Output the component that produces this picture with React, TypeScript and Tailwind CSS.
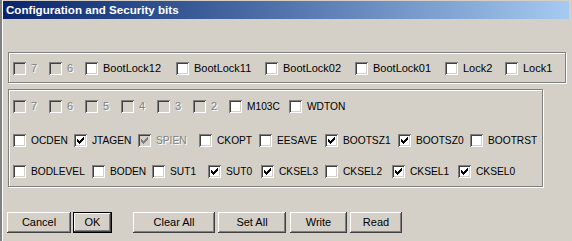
import React from 'react'

type Bit = { label: string; w: string; checked?: boolean; disabled?: boolean }

const row1: Bit[] = [
  { label: '7', w: 'w-[36px]', disabled: true },
  { label: '6', w: 'w-[36px]', disabled: true },
  { label: 'BootLock12', w: 'w-[91px]' },
  { label: 'BootLock11', w: 'w-[89px]' },
  { label: 'BootLock02', w: 'w-[90px]' },
  { label: 'BootLock01', w: 'w-[90px]' },
  { label: 'Lock2', w: 'w-[60px]' },
  { label: 'Lock1', w: 'w-[50px]' },
]

const row2: Bit[] = [
  { label: '7', w: 'w-[36px]', disabled: true },
  { label: '6', w: 'w-[36px]', disabled: true },
  { label: '5', w: 'w-[36px]', disabled: true },
  { label: '4', w: 'w-[36px]', disabled: true },
  { label: '3', w: 'w-[36px]', disabled: true },
  { label: '2', w: 'w-[36px]', disabled: true },
  { label: 'M103C', w: 'w-[60px]' },
  { label: 'WDTON', w: 'w-[60px]' },
]

const row3: Bit[] = [
  { label: 'OCDEN', w: 'w-[61px]' },
  { label: 'JTAGEN', w: 'w-[64px]', checked: true },
  { label: 'SPIEN', w: 'w-[61px]', checked: true, disabled: true },
  { label: 'CKOPT', w: 'w-[60px]' },
  { label: 'EESAVE', w: 'w-[66px]' },
  { label: 'BOOTSZ1', w: 'w-[73px]', checked: true },
  { label: 'BOOTSZ0', w: 'w-[72px]', checked: true },
  { label: 'BOOTRST', w: 'w-[68px]' },
]

const row4: Bit[] = [
  { label: 'BODLEVEL', w: 'w-[79px]' },
  { label: 'BODEN', w: 'w-[60px]' },
  { label: 'SUT1', w: 'w-[56px]' },
  { label: 'SUT0', w: 'w-[53px]', checked: true },
  { label: 'CKSEL3', w: 'w-[64px]', checked: true },
  { label: 'CKSEL2', w: 'w-[67px]' },
  { label: 'CKSEL1', w: 'w-[66px]', checked: true },
  { label: 'CKSEL0', w: 'w-[60px]', checked: true },
]

// classic 7x7 tick, one 3px column per x
const tick = [2, 3, 4, 3, 2, 1, 0]

function Box({ checked, disabled }: { checked?: boolean; disabled?: boolean }) {
  return (
    <div
      className={`relative w-[13px] h-[13px] shrink-0 shadow-[inset_1px_1px_0_#808080,inset_-1px_-1px_0_#ffffff,inset_2px_2px_0_#404040,inset_-2px_-2px_0_#d4d0c8] ${
        disabled ? 'bg-[#d4d0c8]' : 'bg-white'
      }`}
    >
      {checked && (
        <svg width="13" height="13" className="absolute inset-0" shapeRendering="crispEdges">
          {tick.map((s, i) => (
            <rect key={i} x={3 + i} y={3 + s} width="1" height="3" fill={disabled ? '#808080' : '#000'} />
          ))}
        </svg>
      )}
    </div>
  )
}

function Item({ bit }: { bit: Bit }) {
  // caps labels run narrower in the original dialog font
  const caps = /^[A-Z0-9]{3,}$/.test(bit.label)
  return (
    <div className={`flex items-center shrink-0 ${bit.w}`}>
      <Box checked={bit.checked} disabled={bit.disabled} />
      <span
        className={`ml-[5px] whitespace-nowrap leading-[13px] ${caps ? 'text-[10.2px]' : 'text-[11px]'} ${
          bit.disabled ? 'text-[#808080] [text-shadow:1px_1px_0_#ffffff]' : 'text-black'
        }`}
      >
        {bit.label}
      </span>
    </div>
  )
}

function Row({ bits }: { bits: Bit[] }) {
  return (
    <div className="flex items-center h-[13px]">
      {bits.map((b, i) => (
        <Item key={i} bit={b} />
      ))}
    </div>
  )
}

function Button({ label, w, def }: { label: string; w: string; def?: boolean }) {
  return (
    <div
      className={`flex items-center justify-center h-[21px] text-[11px] text-black bg-[#d4d0c8] ${w} ${
        def
          ? 'border border-black shadow-[inset_-1px_-1px_0_#404040,inset_1px_1px_0_#ffffff,inset_-2px_-2px_0_#808080]'
          : 'shadow-[inset_-1px_-1px_0_#404040,inset_1px_1px_0_#ffffff,inset_-2px_-2px_0_#808080,inset_2px_2px_0_#d4d0c8]'
      }`}
    >
      {label}
    </div>
  )
}

export default function App() {
  return (
    <div className="w-[572px] h-[241px] bg-[#d4d0c8] font-['Liberation_Sans',Arial,sans-serif] flex overflow-hidden">
      <div className="w-[2px] h-full bg-[#808080]" />
      <div className="w-[1px] h-full bg-white" />
      <div className="flex-1 flex flex-col">
        {/* Title bar */}
        <div className="mt-[1px] mr-[3px] h-[18px] bg-gradient-to-r from-[#0a246a] to-[#a6caf0] flex items-center pl-[3px]">
          <span className="text-white font-bold text-[11.6px] whitespace-nowrap">Configuration and Security bits</span>
        </div>

        {/* Lock bits */}
        <div className="mt-[33px] ml-[5px] w-[558px] border border-[#808080] shadow-[inset_1px_1px_0_#ffffff,1px_1px_0_#ffffff] pt-[9px] pb-[7px] pl-[4px]">
          <Row bits={row1} />
        </div>

        {/* Fuse bits */}
        <div className="mt-[6px] ml-[5px] w-[535px] border border-[#808080] shadow-[inset_1px_1px_0_#ffffff,1px_1px_0_#ffffff] pt-[10px] pb-[8px] pl-[4px] flex flex-col">
          <Row bits={row2} />
          <div className="mt-[21px]">
            <Row bits={row3} />
          </div>
          <div className="mt-[18px]">
            <Row bits={row4} />
          </div>
        </div>

        {/* Buttons */}
        <div className="mt-[25px] ml-[4px] flex">
          <Button label="Cancel" w="w-[64px]" />
          <div className="ml-[2px]">
            <Button label="OK" w="w-[39px]" def />
          </div>
          <div className="ml-[21px]">
            <Button label="Clear All" w="w-[82px]" />
          </div>
          <div className="ml-[3px]">
            <Button label="Set All" w="w-[68px]" />
          </div>
          <div className="ml-[4px]">
            <Button label="Write" w="w-[57px]" />
          </div>
          <div className="ml-[3px]">
            <Button label="Read" w="w-[52px]" />
          </div>
        </div>
      </div>
    </div>
  )
}
